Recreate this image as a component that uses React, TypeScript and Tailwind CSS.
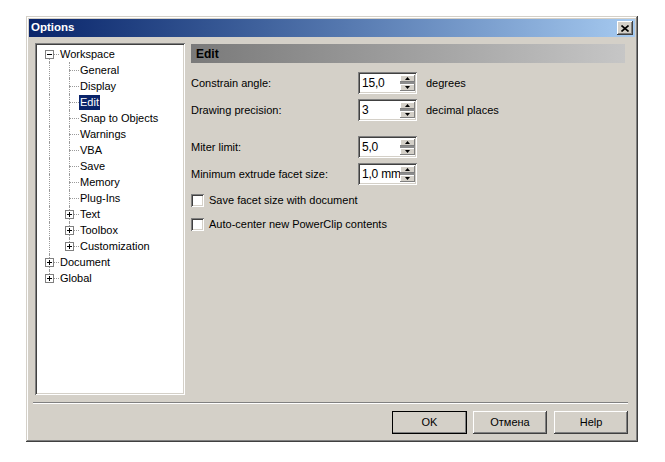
import React from 'react';

type VLine = 'full' | 'top' | 'bottom' | 'none';

type Cell = { v: VLine; h?: boolean; box?: '+' | '-' };

type Row = { label: string; cells: Cell[]; selected?: boolean };

const child = (label: string, v: VLine, box?: '+' | '-', selected?: boolean): Row => ({
  label,
  selected,
  cells: [{ v: 'full' }, { v, h: true, box }],
});

const rows: Row[] = [
  { label: 'Workspace', cells: [{ v: 'bottom', h: true, box: '-' }] },
  child('General', 'full'),
  child('Display', 'full'),
  child('Edit', 'full', undefined, true),
  child('Snap to Objects', 'full'),
  child('Warnings', 'full'),
  child('VBA', 'full'),
  child('Save', 'full'),
  child('Memory', 'full'),
  child('Plug-Ins', 'full'),
  child('Text', 'full', '+'),
  child('Toolbox', 'full', '+'),
  child('Customization', 'top', '+'),
  { label: 'Document', cells: [{ v: 'full', h: true, box: '+' }] },
  { label: 'Global', cells: [{ v: 'top', h: true, box: '+' }] },
];

const raised =
  'shadow-[inset_-1px_-1px_0_#404040,inset_1px_1px_0_#fff,inset_-2px_-2px_0_#808080,inset_2px_2px_0_#d4d0c8]';
const sunken =
  'shadow-[inset_1px_1px_0_#808080,inset_-1px_-1px_0_#fff,inset_2px_2px_0_#404040,inset_-2px_-2px_0_#d4d0c8]';

function TreeCell({ v, h, box }: Cell) {
  return (
    <div className="relative h-[16px] w-[20px] shrink-0">
      {v === 'full' && <div className="absolute left-[10px] top-0 h-[16px] border-l border-dotted border-[#9a9a9a]" />}
      {v === 'top' && <div className="absolute left-[10px] top-0 h-[8px] border-l border-dotted border-[#9a9a9a]" />}
      {v === 'bottom' && <div className="absolute left-[10px] top-[8px] h-[8px] border-l border-dotted border-[#9a9a9a]" />}
      {h && <div className="absolute left-[10px] top-[8px] w-[10px] border-t border-dotted border-[#9a9a9a]" />}
      {box && (
        <div className="absolute left-[6px] top-[4px] h-[9px] w-[9px] border border-[#808080] bg-white">
          <div className="absolute left-[1px] top-[3px] h-px w-[5px] bg-black" />
          {box === '+' && <div className="absolute left-[3px] top-[1px] h-[5px] w-px bg-black" />}
        </div>
      )}
    </div>
  );
}

function Spin({ value }: { value: string }) {
  return (
    <div className={`flex h-[22px] w-[59px] items-stretch bg-white p-[2px] ${sunken}`}>
      <div className="flex flex-1 items-center overflow-hidden whitespace-nowrap pl-[2px] text-[12px] leading-none tracking-[-0.2px] text-black">
        {value}
      </div>
      <div className="my-[1px] flex w-[15px] shrink-0 flex-col">
        <div className="flex h-[7px] items-center justify-center bg-[#d4d0c8] shadow-[inset_-1px_-1px_0_#808080,inset_1px_1px_0_#fff]">
          <svg width="5" height="3" viewBox="0 0 5 3"><path d="M2.5 0L5 3H0z" fill="#000" /></svg>
        </div>
        <div className="h-[3px] bg-[#8c8c8c]" />
        <div className="flex h-[7px] items-center justify-center bg-[#d4d0c8] shadow-[inset_-1px_-1px_0_#808080,inset_1px_1px_0_#fff]">
          <svg width="5" height="3" viewBox="0 0 5 3"><path d="M0 0H5L2.5 3z" fill="#000" /></svg>
        </div>
      </div>
    </div>
  );
}

function Field({ label, value, unit, className = '' }: { label: string; value: string; unit?: string; className?: string }) {
  return (
    <div className={`flex items-center ${className}`}>
      <div className="w-[167px] text-[11px]">{label}</div>
      <Spin value={value} />
      {unit && <div className="ml-[9px] text-[11px]">{unit}</div>}
    </div>
  );
}

function Check({ label }: { label: string }) {
  return (
    <div className="flex h-[13px] items-center">
      <div className={`h-[13px] w-[13px] bg-white ${sunken}`} />
      <div className="ml-[5px] text-[11px]">{label}</div>
    </div>
  );
}

function Button({ label, def, className = '' }: { label: string; def?: boolean; className?: string }) {
  return (
    <div
      className={`flex h-[23px] items-center justify-center bg-[#d4d0c8] text-[11px] ${raised} ${
        def ? 'w-[75px] outline outline-1 -outline-offset-1 outline-black' : 'w-[74px]'
      } ${className}`}
    >
      {label}
    </div>
  );
}

export default function App() {
  return (
    <div className="h-[462px] w-[665px] bg-white pl-[26px] pt-[16px] font-['Liberation_Sans',Arial,sans-serif] text-black">
      <div className="flex h-[426px] w-[612px] flex-col bg-[#d4d0c8] p-[3px] shadow-[inset_-1px_-1px_0_#404040,inset_1px_1px_0_#d4d0c8,inset_-2px_-2px_0_#808080,inset_2px_2px_0_#fff]">
        <div className="flex h-[18px] items-center justify-between bg-gradient-to-r from-[#0a246a] to-[#a6caf0] pl-[2px] pr-[2px]">
          <span className="text-[11.5px] font-bold text-white">Options</span>
          <div className={`flex h-[14px] w-[16px] items-center justify-center bg-[#d4d0c8] ${raised}`}>
            <svg width="8" height="7" viewBox="0 0 8 7">
              <path d="M0.5 0.5L7.5 6.5M7.5 0.5L0.5 6.5" stroke="#000" strokeWidth="1.6" />
            </svg>
          </div>
        </div>

        <div className="flex px-[6px] pt-[6px]">
          <div className={`h-[352px] w-[150px] bg-white pl-[4px] pt-[3px] ${sunken}`}>
            {rows.map((r) => (
              <div key={r.label} className="flex h-[16px] items-center">
                {r.cells.map((c, i) => (
                  <TreeCell key={i} {...c} />
                ))}
                <span
                  className={`px-[1px] text-[11px] leading-[15px] ${
                    r.selected ? 'bg-[#0a246a] text-white' : 'text-black'
                  }`}
                >
                  {r.label}
                </span>
              </div>
            ))}
          </div>

          <div className="ml-[6px] mt-[1px] w-[434px]">
            <div className="flex h-[19px] items-center bg-gradient-to-r from-[#7a7a7a] to-[#c6c6c6] pl-[5px] text-[12px] font-bold">
              Edit
            </div>
            <Field className="mt-[9px]" label="Constrain angle:" value="15,0" unit="degrees" />
            <Field className="mt-[5px]" label="Drawing precision:" value="3" unit="decimal places" />
            <Field className="mt-[15px]" label="Miter limit:" value="5,0" />
            <Field className="mt-[5px]" label="Minimum extrude facet size:" value="1,0 mm" />
            <div className="mt-[9px] flex flex-col gap-[11px]">
              <Check label="Save facet size with document" />
              <Check label="Auto-center new PowerClip contents" />
            </div>
          </div>
        </div>

        <div className="ml-[4px] mt-[7px] w-[595px] border-b border-t border-b-white border-t-[#808080]" />

        <div className="mt-[7px] flex justify-end gap-[6px] pr-[7px]">
          <Button label="OK" def />
          <Button label="Отмена" />
          <Button label="Help" className="ml-[1px]" />
        </div>
      </div>
    </div>
  );
}
